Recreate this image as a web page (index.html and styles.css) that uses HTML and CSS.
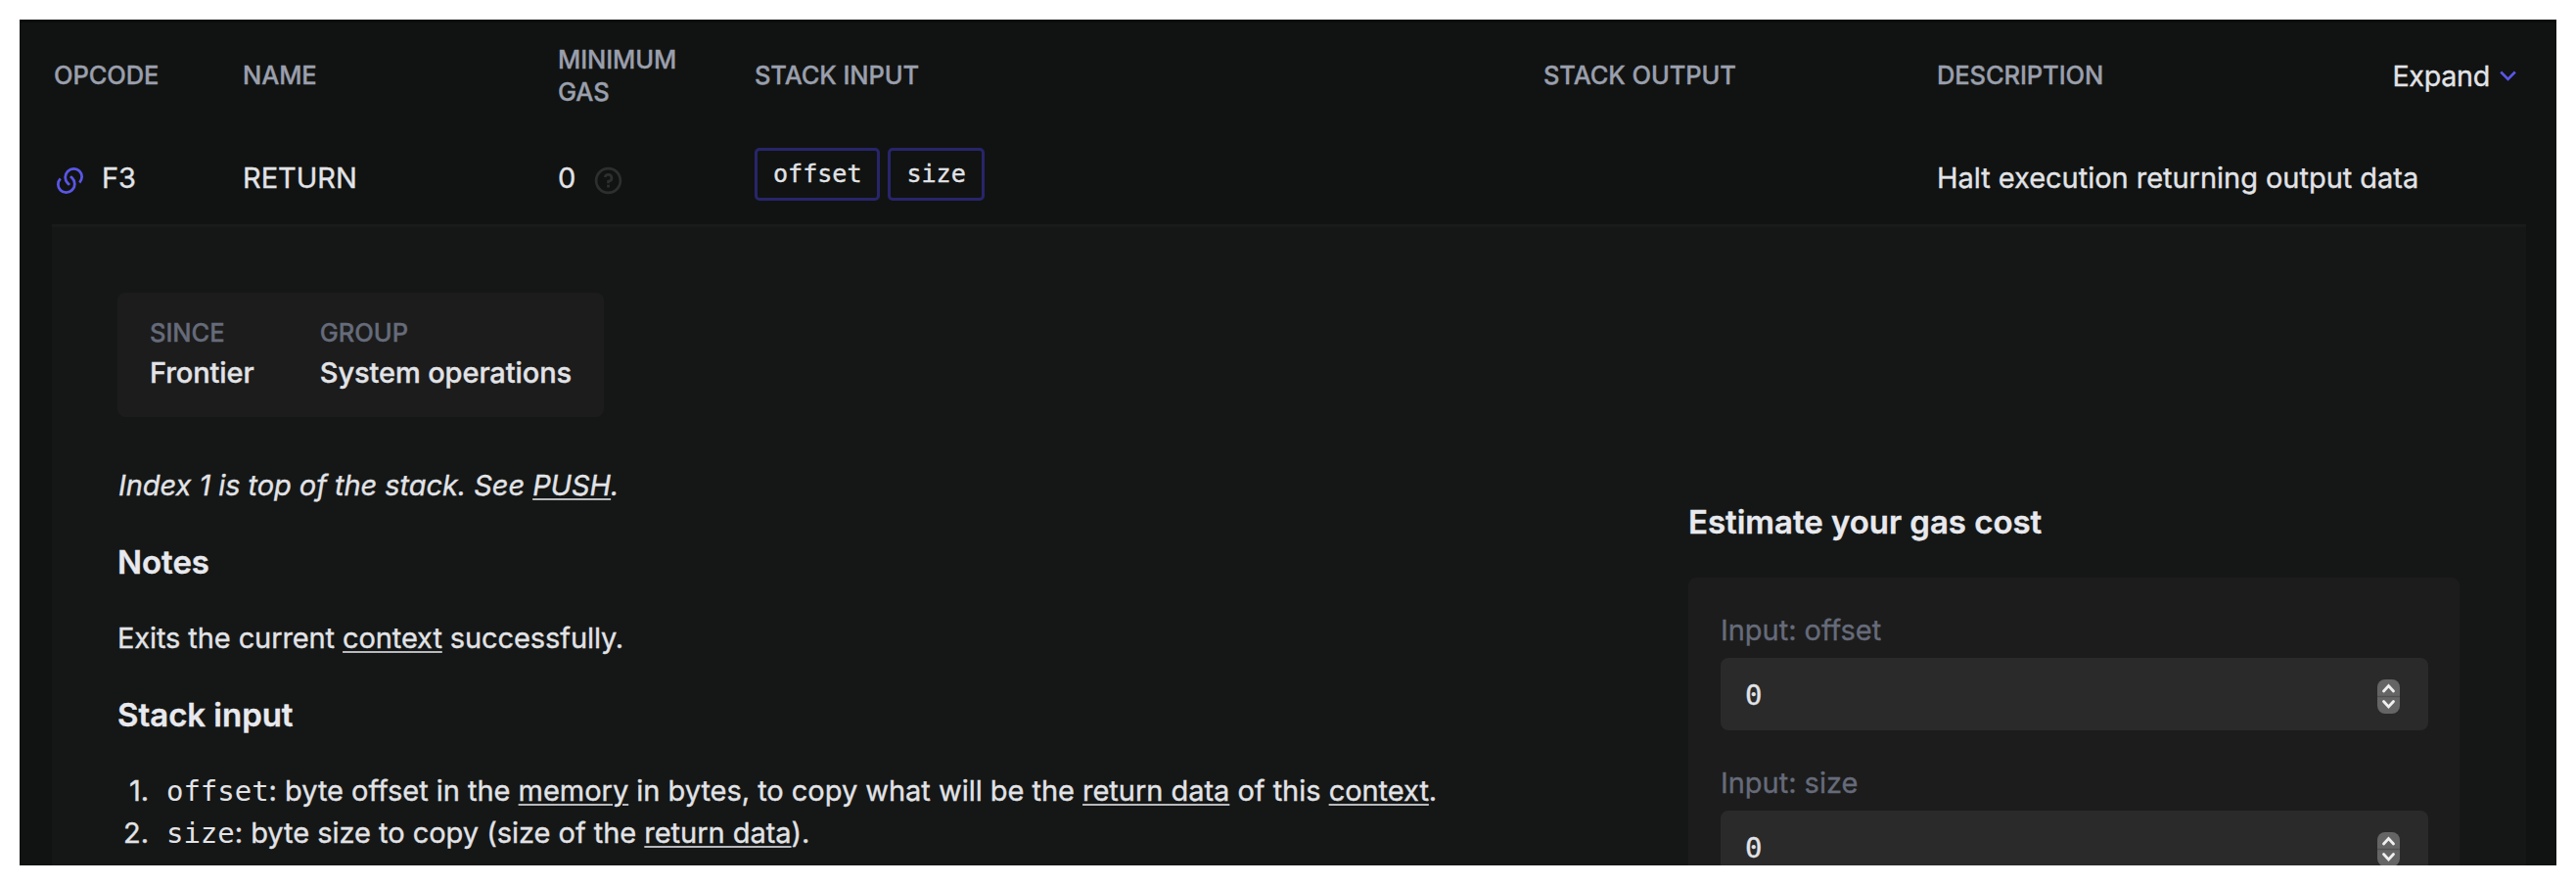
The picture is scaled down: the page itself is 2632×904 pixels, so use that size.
FILE: index.html
```html
<!DOCTYPE html>
<html lang="en">
<head>
<meta charset="utf-8">
<title>RETURN opcode</title>
<link rel="stylesheet" href="styles.css">
</head>
<body>
<main class="panel">
  <div class="row head">
    <div>OPCODE</div>
    <div>NAME</div>
    <div class="gas-head">MINIMUM GAS</div>
    <div>STACK INPUT</div>
    <div>STACK OUTPUT</div>
    <div>DESCRIPTION</div>
    <div class="expand">Expand
      <svg class="chevron" viewBox="0 0 24 24"><path d="M12 13.172l4.95-4.95 1.414 1.414L12 16 5.636 9.636 7.05 8.222z"/></svg>
    </div>
  </div>
  <div class="row opcode">
    <div class="cell code-cell">
      <svg class="link" viewBox="0 0 24 24"><path d="M13.06 8.11l1.415 1.415a7 7 0 0 1 0 9.9l-.354.353a7 7 0 0 1-9.9-9.9l1.415 1.415a5 5 0 1 0 7.071 7.071l.354-.354a5 5 0 0 0 0-7.07l-1.415-1.415 1.415-1.414zm6.718 6.011l-1.414-1.414a5 5 0 1 0-7.071-7.071l-.354.354a5 5 0 0 0 0 7.07l1.415 1.415-1.415 1.414-1.414-1.414a7 7 0 0 1 0-9.9l.354-.353a7 7 0 0 1 9.9 9.9z"/></svg>
      <span>F3</span>
    </div>
    <div class="cell">RETURN</div>
    <div class="cell gas-cell">
      <span>0</span>
      <svg class="help" viewBox="0 0 24 24"><path d="M12 22C6.477 22 2 17.523 2 12S6.477 2 12 2s10 4.477 10 10-4.477 10-10 10zm0-2a8 8 0 1 0 0-16 8 8 0 0 0 0 16zm-1-5h2v2h-2v-2zm2-1.645V14h-2v-1.5a1 1 0 0 1 1-1 1.5 1.5 0 1 0-1.471-1.794l-1.962-.393A3.501 3.501 0 1 1 13 13.355z"/></svg>
    </div>
    <div class="stack"><span class="chip">offset</span><span class="chip">size</span></div>
    <div></div>
    <div class="cell wide">Halt execution returning output data</div>
  </div>
  <section class="detail">
    <div class="docs">
      <dl class="info">
        <div class="since"><dt>SINCE</dt><dd>Frontier</dd></div>
        <div><dt>GROUP</dt><dd>System operations</dd></div>
      </dl>
      <p class="hint">Index 1 is top of the stack. See <a>PUSH</a>.</p>
      <h2>Notes</h2>
      <p class="note">Exits the current <a>context</a> successfully.</p>
      <h2>Stack input</h2>
      <div class="list">
        <div class="item"><span class="num">1.</span><span><code>offset</code>: byte offset in the <a>memory</a> in bytes, to copy what will be the <a>return data</a> of this <a>context</a>.</span></div>
        <div class="item"><span class="num">2.</span><span><code>size</code>: byte size to copy (size of the <a>return data</a>).</span></div>
      </div>
    </div>
    <aside class="estimate">
      <h2>Estimate your gas cost</h2>
      <div class="form">
        <div class="label">Input: offset</div>
        <div class="input"><span>0</span>
          <svg class="spinner" viewBox="0 0 23 35"><rect width="23" height="35" rx="8" fill="#656565"/><path d="M0 17.5h23" stroke="#515151" stroke-width="1.5"/><path d="M6.5 12l5-5.500 5 5.500M6.500 22.500l5 5.500 5-5.500" fill="none" stroke="#f0f0f0" stroke-width="2.800" stroke-linecap="round"/></svg>
        </div>
        <div class="label">Input: size</div>
        <div class="input"><span>0</span>
          <svg class="spinner" viewBox="0 0 23 35"><rect width="23" height="35" rx="8" fill="#656565"/><path d="M0 17.5h23" stroke="#515151" stroke-width="1.5"/><path d="M6.5 12l5-5.500 5 5.500M6.500 22.500l5 5.500 5-5.500" fill="none" stroke="#f0f0f0" stroke-width="2.800" stroke-linecap="round"/></svg>
        </div>
      </div>
    </aside>
  </section>
</main>
</body>
</html>
```
FILE: styles.css
```css
* { box-sizing: border-box; }
html { background: #fff; overflow: hidden; }
body {
  margin: 0;
  padding: 20px;
  height: 904px;
  font: 29px/41.8px Inter, "Liberation Sans", sans-serif;
  letter-spacing: -0.03px;
  color: #e2e3e7;
  -webkit-text-stroke: 0.35px;
}
h2, p, dl, dd { margin: 0; }
svg { display: block; flex: none; }
.panel {
  height: 864px;
  overflow: hidden;
  background: #111312;
  border-top: 3px solid #0b0d0c;
}
.row {
  display: grid;
  grid-template-columns: 193px 322px 201px 806px 402px 1fr;
  padding: 0 41px 0 35px;
}
.head {
  grid-template-columns: 193px 322px 201px 806px 402px 1fr auto;
  height: 110px;
  padding-bottom: 3px;
  align-items: center;
  font-size: 25.5px;
  line-height: 33px;
  font-weight: 500;
  letter-spacing: -0.1px;
  color: #9a9fac;
}
.gas-head { width: 130px; }
.expand {
  display: flex;
  align-items: center;
  gap: 3px;
  margin-right: -7px;
  padding-top: 1px;
  font-size: 28.7px;
  font-weight: 400;
  letter-spacing: -0.3px;
  color: #e2e3e7;
}
.chevron { width: 31px; height: 31px; fill: #5a56e8; }
.opcode { height: 96px; }
.cell { padding-top: 28px; }
.code-cell, .gas-cell { display: flex; align-items: flex-start; }
.code-cell { gap: 16px; }
.gas-cell { gap: 17px; }
.link, .help { width: 33px; height: 33px; margin-top: 7px; }
.link { fill: #5a56e8; }
.help { fill: #2d2e2e; }
.stack { display: flex; gap: 8px; padding-top: 18px; height: 72px; }
.chip {
  height: 54px;
  padding: 1px 16px 0;
  border: 3px solid #28256b;
  border-radius: 5px;
  font: 25.1px/46px "DejaVu Sans Mono", monospace;
}
.detail {
  display: flex;
  justify-content: space-between;
  height: 655px;
  margin: 0 31px 0 33px;
  padding: 67px 68px 0 67px;
  background: #151716;
  border-top: 3px solid #191b1a;
}
.info {
  display: flex;
  width: 497px;
  height: 127px;
  padding: 24px 33px;
  border-radius: 8px;
  background: #1c1c1c;
}
.since { width: 174px; }
dt {
  margin-bottom: 4px;
  font-size: 25.5px;
  line-height: 33px;
  font-weight: 500;
  color: #666b7a;
}
dd { font-weight: 500; white-space: nowrap; letter-spacing: -0.1px; }
.hint { margin-top: 49px; padding-left: 1px; font-style: italic; letter-spacing: -0.06px; }
.note { letter-spacing: -0.1px; }
a {
  text-decoration: underline;
  text-decoration-thickness: 2px;
  text-underline-offset: 3px;
  text-decoration-color: #b8b9bd;
}
h2 { font-size: 33px; line-height: 41.8px; font-weight: 600; color: #e8e9ee; }
.docs h2 { margin: 37px 0 35.5px; }
.item { display: flex; gap: 18px; white-space: nowrap; line-height: 41.5px; }
.num { width: 32px; text-align: right; }
code { font-family: "DejaVu Sans Mono", monospace; -webkit-text-stroke: 0; }
.estimate { width: 788px; margin-top: 214px; }
.form {
  height: 400px;
  margin-top: 35px;
  padding: 33.5px 32px 0 33px;
  border-radius: 8px;
  background: #1c1c1c;
}
.label { margin-bottom: 6.7px; color: #666b7a; }
.input {
  display: flex;
  justify-content: space-between;
  height: 74px;
  margin-bottom: 33.5px;
  padding: 22px 29px 0 25px;
  border-radius: 8px;
  background: #2a2a2a;
  font: 29px/32px "DejaVu Sans Mono", monospace;
}
.spinner { width: 23px; height: 35px; }
```
